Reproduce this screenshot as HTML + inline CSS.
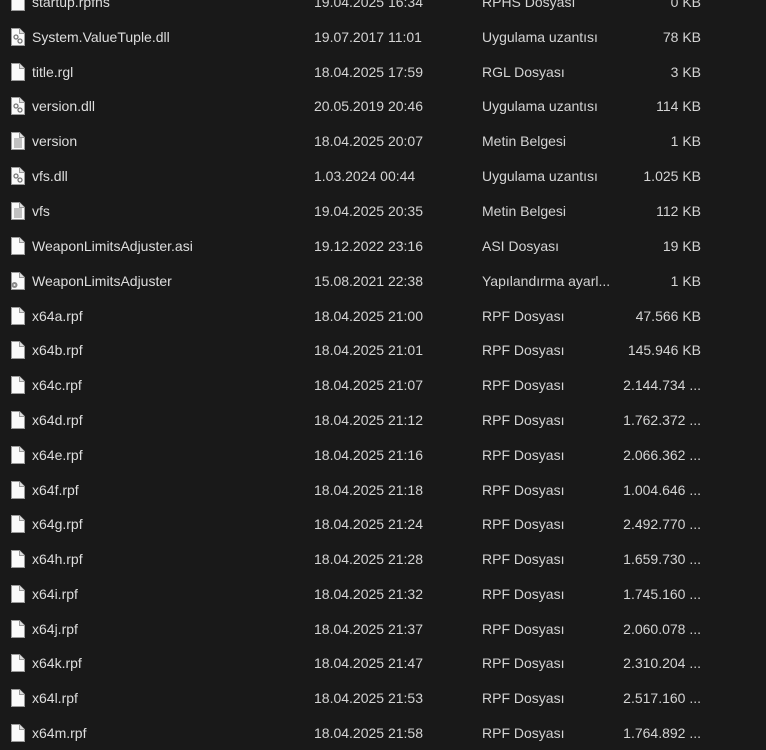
<!DOCTYPE html>
<html><head><meta charset="utf-8"><style>
body{margin:0;background:#191919;width:766px;height:750px;overflow:hidden;position:relative;font-family:"Liberation Sans",sans-serif;font-size:14px;color:#dedede}
.r{position:absolute;left:0;width:766px;height:20px;line-height:20px}
.r span{position:absolute;top:0;white-space:nowrap}
.n{left:32px}.d{left:314px;color:#d4d4d4}.t{left:482px;color:#d4d4d4}.s{right:65px;color:#d4d4d4}
.r svg{position:absolute;left:10px;top:1px}
</style></head><body>
<svg width="0" height="0" style="position:absolute"><defs>
<g id="pg"><path d="M1.5 .5H9.5L14.5 5.5V17.5H1.5Z" fill="#fafafa" stroke="#9a9a9a"/><path d="M9.5 .5V5.5H14.5" fill="#ddd" stroke="#9a9a9a"/></g>
<g id="tx"><use href="#pg"/><path d="M4 7H12M4 9H12M4 11H12M4 13H12M4 15H12" stroke="#888" stroke-width="1"/></g>
<g id="dl"><use href="#pg"/><circle cx="6" cy="9" r="2" fill="none" stroke="#777" stroke-width="1.3"/><circle cx="10" cy="13" r="2" fill="none" stroke="#777" stroke-width="1.3"/></g>
<g id="cf"><use href="#pg"/><circle cx="4.5" cy="13" r="3" fill="#888"/><circle cx="4.5" cy="13" r="1" fill="#eee"/></g>
</defs></svg>
<div class="r" style="top:-8px"><svg width="16" height="18"><use href="#pg"/></svg><span class="n">startup.rpfhs</span><span class="d">19.04.2025 16:34</span><span class="t">RPHS Dosyası</span><span class="s">0 KB</span></div>
<div class="r" style="top:27px"><svg width="16" height="18"><use href="#dl"/></svg><span class="n">System.ValueTuple.dll</span><span class="d">19.07.2017 11:01</span><span class="t">Uygulama uzantısı</span><span class="s">78 KB</span></div>
<div class="r" style="top:62px"><svg width="16" height="18"><use href="#pg"/></svg><span class="n">title.rgl</span><span class="d">18.04.2025 17:59</span><span class="t">RGL Dosyası</span><span class="s">3 KB</span></div>
<div class="r" style="top:96px"><svg width="16" height="18"><use href="#dl"/></svg><span class="n">version.dll</span><span class="d">20.05.2019 20:46</span><span class="t">Uygulama uzantısı</span><span class="s">114 KB</span></div>
<div class="r" style="top:131px"><svg width="16" height="18"><use href="#tx"/></svg><span class="n">version</span><span class="d">18.04.2025 20:07</span><span class="t">Metin Belgesi</span><span class="s">1 KB</span></div>
<div class="r" style="top:166px"><svg width="16" height="18"><use href="#dl"/></svg><span class="n">vfs.dll</span><span class="d">1.03.2024 00:44</span><span class="t">Uygulama uzantısı</span><span class="s">1.025 KB</span></div>
<div class="r" style="top:201px"><svg width="16" height="18"><use href="#tx"/></svg><span class="n">vfs</span><span class="d">19.04.2025 20:35</span><span class="t">Metin Belgesi</span><span class="s">112 KB</span></div>
<div class="r" style="top:236px"><svg width="16" height="18"><use href="#pg"/></svg><span class="n">WeaponLimitsAdjuster.asi</span><span class="d">19.12.2022 23:16</span><span class="t">ASI Dosyası</span><span class="s">19 KB</span></div>
<div class="r" style="top:271px"><svg width="16" height="18"><use href="#cf"/></svg><span class="n">WeaponLimitsAdjuster</span><span class="d">15.08.2021 22:38</span><span class="t">Yapılandırma ayarl...</span><span class="s">1 KB</span></div>
<div class="r" style="top:306px"><svg width="16" height="18"><use href="#pg"/></svg><span class="n">x64a.rpf</span><span class="d">18.04.2025 21:00</span><span class="t">RPF Dosyası</span><span class="s">47.566 KB</span></div>
<div class="r" style="top:340px"><svg width="16" height="18"><use href="#pg"/></svg><span class="n">x64b.rpf</span><span class="d">18.04.2025 21:01</span><span class="t">RPF Dosyası</span><span class="s">145.946 KB</span></div>
<div class="r" style="top:375px"><svg width="16" height="18"><use href="#pg"/></svg><span class="n">x64c.rpf</span><span class="d">18.04.2025 21:07</span><span class="t">RPF Dosyası</span><span class="s">2.144.734 ...</span></div>
<div class="r" style="top:410px"><svg width="16" height="18"><use href="#pg"/></svg><span class="n">x64d.rpf</span><span class="d">18.04.2025 21:12</span><span class="t">RPF Dosyası</span><span class="s">1.762.372 ...</span></div>
<div class="r" style="top:445px"><svg width="16" height="18"><use href="#pg"/></svg><span class="n">x64e.rpf</span><span class="d">18.04.2025 21:16</span><span class="t">RPF Dosyası</span><span class="s">2.066.362 ...</span></div>
<div class="r" style="top:480px"><svg width="16" height="18"><use href="#pg"/></svg><span class="n">x64f.rpf</span><span class="d">18.04.2025 21:18</span><span class="t">RPF Dosyası</span><span class="s">1.004.646 ...</span></div>
<div class="r" style="top:514px"><svg width="16" height="18"><use href="#pg"/></svg><span class="n">x64g.rpf</span><span class="d">18.04.2025 21:24</span><span class="t">RPF Dosyası</span><span class="s">2.492.770 ...</span></div>
<div class="r" style="top:549px"><svg width="16" height="18"><use href="#pg"/></svg><span class="n">x64h.rpf</span><span class="d">18.04.2025 21:28</span><span class="t">RPF Dosyası</span><span class="s">1.659.730 ...</span></div>
<div class="r" style="top:584px"><svg width="16" height="18"><use href="#pg"/></svg><span class="n">x64i.rpf</span><span class="d">18.04.2025 21:32</span><span class="t">RPF Dosyası</span><span class="s">1.745.160 ...</span></div>
<div class="r" style="top:619px"><svg width="16" height="18"><use href="#pg"/></svg><span class="n">x64j.rpf</span><span class="d">18.04.2025 21:37</span><span class="t">RPF Dosyası</span><span class="s">2.060.078 ...</span></div>
<div class="r" style="top:653px"><svg width="16" height="18"><use href="#pg"/></svg><span class="n">x64k.rpf</span><span class="d">18.04.2025 21:47</span><span class="t">RPF Dosyası</span><span class="s">2.310.204 ...</span></div>
<div class="r" style="top:688px"><svg width="16" height="18"><use href="#pg"/></svg><span class="n">x64l.rpf</span><span class="d">18.04.2025 21:53</span><span class="t">RPF Dosyası</span><span class="s">2.517.160 ...</span></div>
<div class="r" style="top:723px"><svg width="16" height="18"><use href="#pg"/></svg><span class="n">x64m.rpf</span><span class="d">18.04.2025 21:58</span><span class="t">RPF Dosyası</span><span class="s">1.764.892 ...</span></div>
</body></html>
